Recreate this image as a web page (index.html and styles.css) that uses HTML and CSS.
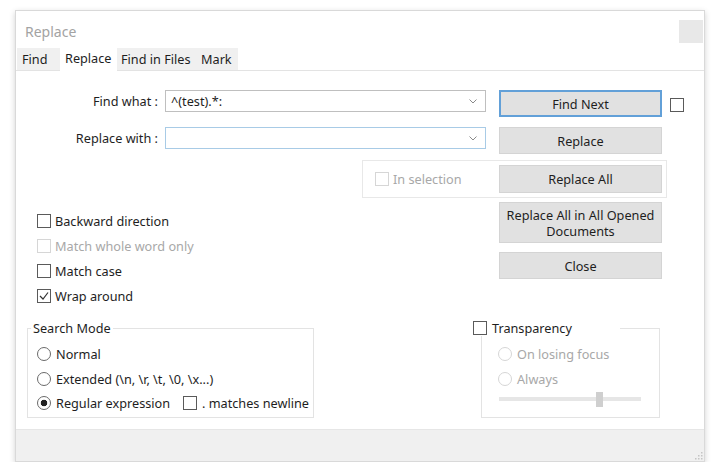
FILE: index.html
```html
<!DOCTYPE html>
<html lang="en">
<head>
  <meta charset="UTF-8">
  <title>Replace</title>
  <link rel="stylesheet" href="styles.css">
</head>
<body>
  <div class="dialog">
    <div class="titlebar">
      <span class="title">Replace</span>
      <span class="close-btn"></span>
    </div>
    <div class="tabs">
      <span class="tab tab-find">Find</span>
      <span class="tab tab-replace active">Replace</span>
      <span class="tab tab-files">Find in Files</span>
      <span class="tab tab-mark">Mark</span>
    </div>
    <div class="content">
      <div class="row">
        <label class="field-label">Find what :</label>
        <div class="combo">
          <span class="combo-text">^(test).*:</span>
          <svg class="chev" width="8" height="5" viewBox="0 0 8 5"><polyline points="0.5,0.5 4,4 7.5,0.5" fill="none" stroke="#8a8a8a" stroke-width="1"/></svg>
        </div>
        <button class="btn focused">Find Next</button>
        <span class="box extra-check"></span>
      </div>
      <div class="row">
        <label class="field-label">Replace with :</label>
        <div class="combo active">
          <span class="combo-text"></span>
          <svg class="chev" width="8" height="5" viewBox="0 0 8 5"><polyline points="0.5,0.5 4,4 7.5,0.5" fill="none" stroke="#8a8a8a" stroke-width="1"/></svg>
        </div>
        <button class="btn">Replace</button>
      </div>
      <div class="selection-group">
        <span class="option disabled"><span class="box"></span>In selection</span>
        <button class="btn">Replace All</button>
      </div>
      <div class="middle">
        <div class="options">
          <div class="option"><span class="box"></span>Backward direction</div>
          <div class="option disabled"><span class="box"></span>Match whole word only</div>
          <div class="option"><span class="box"></span>Match case</div>
          <div class="option">
            <span class="box">
              <svg width="12" height="12" viewBox="0 0 12 12"><polyline points="2,6 5,9 10,2.5" fill="none" stroke="#333" stroke-width="1.2"/></svg>
            </span>Wrap around
          </div>
        </div>
        <div class="buttons">
          <button class="btn tall">Replace All in All Opened Documents</button>
          <button class="btn">Close</button>
        </div>
      </div>
      <div class="groups">
        <fieldset class="group search-mode">
          <legend>Search Mode</legend>
          <div class="option"><span class="radio"></span>Normal</div>
          <div class="option"><span class="radio"></span>Extended (\n, \r, \t, \0, \x...)</div>
          <div class="option">
            <span class="regex-label"><span class="radio checked"></span>Regular expression</span>
            <span class="newline-label"><span class="box"></span>. matches newline</span>
          </div>
        </fieldset>
        <fieldset class="group transparency">
          <legend><span class="legend-check"><span class="box"></span>Transparency</span></legend>
          <div class="option disabled"><span class="radio"></span>On losing focus</div>
          <div class="option disabled"><span class="radio"></span>Always</div>
          <div class="slider">
            <div class="track"><span class="thumb"></span></div>
          </div>
        </fieldset>
      </div>
    </div>
    <div class="statusbar">
      <svg class="grip" width="10" height="10" viewBox="0 0 10 10">
        <rect x="8" y="2" width="1.5" height="1.5" fill="#c4c4c4"/>
        <rect x="5" y="5" width="1.5" height="1.5" fill="#c4c4c4"/>
        <rect x="8" y="5" width="1.5" height="1.5" fill="#c4c4c4"/>
        <rect x="2" y="8" width="1.5" height="1.5" fill="#c4c4c4"/>
        <rect x="5" y="8" width="1.5" height="1.5" fill="#c4c4c4"/>
        <rect x="8" y="8" width="1.5" height="1.5" fill="#c4c4c4"/>
      </svg>
    </div>
  </div>
</body>
</html>
```
FILE: styles.css
```css
body {
  margin: 0;
  background: #fff;
  font-family: "Noto Sans", "Open Sans", sans-serif;
  font-size: 12.7px;
  color: #1e1e1e;
}
.dialog {
  margin: 10px 0 0 15px;
  width: 690px;
  height: 452px;
  box-sizing: border-box;
  border: 1px solid #d9d9d9;
  box-shadow: 0 2px 6px rgba(0,0,0,0.18);
  display: flex;
  flex-direction: column;
  background: #fff;
}
.titlebar {
  height: 36px;
  display: flex;
  align-items: flex-start;
}
.title {
  padding: 12px 0 0 9px;
  line-height: 18px;
  font-size: 14px;
  color: #a3a3a3;
}
.close-btn {
  margin: 9px 1px 0 auto;
  width: 24px;
  height: 23px;
  background: #e8e8e8;
}
.tabs {
  display: flex;
  align-items: flex-end;
  height: 23px;
  border-bottom: 1px solid #e3e3e3;
  padding-left: 1px;
}
.tab {
  height: 22px;
  line-height: 22px;
  background: #f0f0f0;
  padding-left: 5px;
  box-sizing: border-box;
  white-space: nowrap;
}
.tab.active {
  background: #fff;
  height: 24px;
  line-height: 23px;
  margin-bottom: -1px;
}
.tab-find { width: 43px; }
.tab-replace { width: 57px; }
.tab-files { width: 80px; padding-left: 4px; }
.tab-mark { width: 41px; padding-left: 4px; }
.content {
  flex: 1;
  padding-top: 19px;
}
.row {
  display: flex;
  align-items: flex-start;
  height: 27px;
}
.row + .row {
  margin-top: 10px;
}
.field-label {
  width: 145px;
  box-sizing: border-box;
  padding-right: 3px;
  text-align: right;
  line-height: 22px;
}
.combo {
  margin-left: 4px;
  width: 321px;
  height: 22px;
  box-sizing: border-box;
  border: 1px solid #bfbfbf;
  display: flex;
  align-items: center;
}
.combo.active {
  border-color: #a8cbe6;
}
.combo-text {
  padding-left: 5px;
}
.chev {
  margin: 0 8px 0 auto;
}
.btn {
  width: 163px;
  height: 27px;
  margin-left: 13px;
  padding: 0;
  box-sizing: border-box;
  background: #e1e1e1;
  border: 1px solid #d4d4d4;
  font: inherit;
  color: #1e1e1e;
}
.btn.focused {
  border: 2px solid #62a0d8;
}
.btn.tall {
  height: 41px;
  line-height: 16px;
}
.box {
  width: 14px;
  height: 14px;
  box-sizing: border-box;
  border: 1px solid #5a5a5a;
  background: #fff;
  margin-right: 4px;
  display: inline-flex;
  align-items: center;
  justify-content: center;
  flex-shrink: 0;
}
.extra-check {
  margin: 8px 0 0 8px;
}
.radio {
  width: 14px;
  height: 14px;
  box-sizing: border-box;
  border: 1px solid #6a6a6a;
  border-radius: 50%;
  background: #fff;
  margin-right: 5px;
  flex-shrink: 0;
}
.radio.checked {
  background: radial-gradient(circle, #222 0 3px, #fff 3.6px);
}
.option {
  display: flex;
  align-items: center;
  height: 25px;
  white-space: nowrap;
}
.option.disabled {
  color: #a8a8a8;
}
.option.disabled .box,
.option.disabled .radio {
  border-color: #d6d6d6;
}
.selection-group {
  margin: 6px 0 0 346px;
  width: 305px;
  height: 38px;
  box-sizing: border-box;
  border: 1px solid #e8e8e8;
  display: flex;
  align-items: center;
  padding: 0 4px 0 12px;
}
.selection-group .btn {
  margin-left: auto;
  height: 28px;
}
.middle {
  display: flex;
}
.options {
  width: 483px;
  box-sizing: border-box;
  padding: 10px 0 0 21px;
}
.buttons {
  padding-top: 4px;
  display: flex;
  flex-direction: column;
  gap: 9px;
}
.buttons .btn {
  margin-left: 0;
}
.groups {
  display: flex;
  margin-top: 12px;
}
.group {
  margin: 0;
  height: 98px;
  box-sizing: border-box;
  border: 1px solid #e3e3e3;
  min-width: 0;
}
.group legend {
  line-height: 16px;
  padding: 0 2px;
}
.group .option {
  height: 24.75px;
}
.search-mode {
  margin-left: 11px;
  width: 287px;
  padding: 5.5px 0 0 9px;
}
.search-mode legend {
  margin-left: -6px;
}
.regex-label {
  width: 146px;
  display: flex;
  align-items: center;
}
.newline-label {
  display: flex;
  align-items: center;
}
.newline-label .box {
  margin-right: 5px;
}
.transparency {
  margin-left: 167px;
  width: 179px;
  padding: 5.5px 0 0 16px;
}
.transparency legend {
  margin-left: -25px;
  width: 147px;
  box-sizing: border-box;
  padding: 0;
  background: #fff;
}
.legend-check {
  display: flex;
  align-items: center;
}
.legend-check .box {
  margin-right: 5px;
}
.slider {
  height: 16px;
  display: flex;
  align-items: center;
  padding-left: 1px;
}
.track {
  width: 142px;
  height: 4px;
  background: #e6e6e6;
  display: flex;
  align-items: center;
}
.thumb {
  margin-left: 97px;
  width: 7px;
  height: 15px;
  flex-shrink: 0;
  background: #cfcfcf;
}
.statusbar {
  height: 32px;
  box-sizing: border-box;
  border-top: 1px solid #e6e6e6;
  background: #f0f0f0;
  display: flex;
  justify-content: flex-end;
  align-items: flex-end;
}
.grip {
  margin: 0 1px 1px 0;
}
```
